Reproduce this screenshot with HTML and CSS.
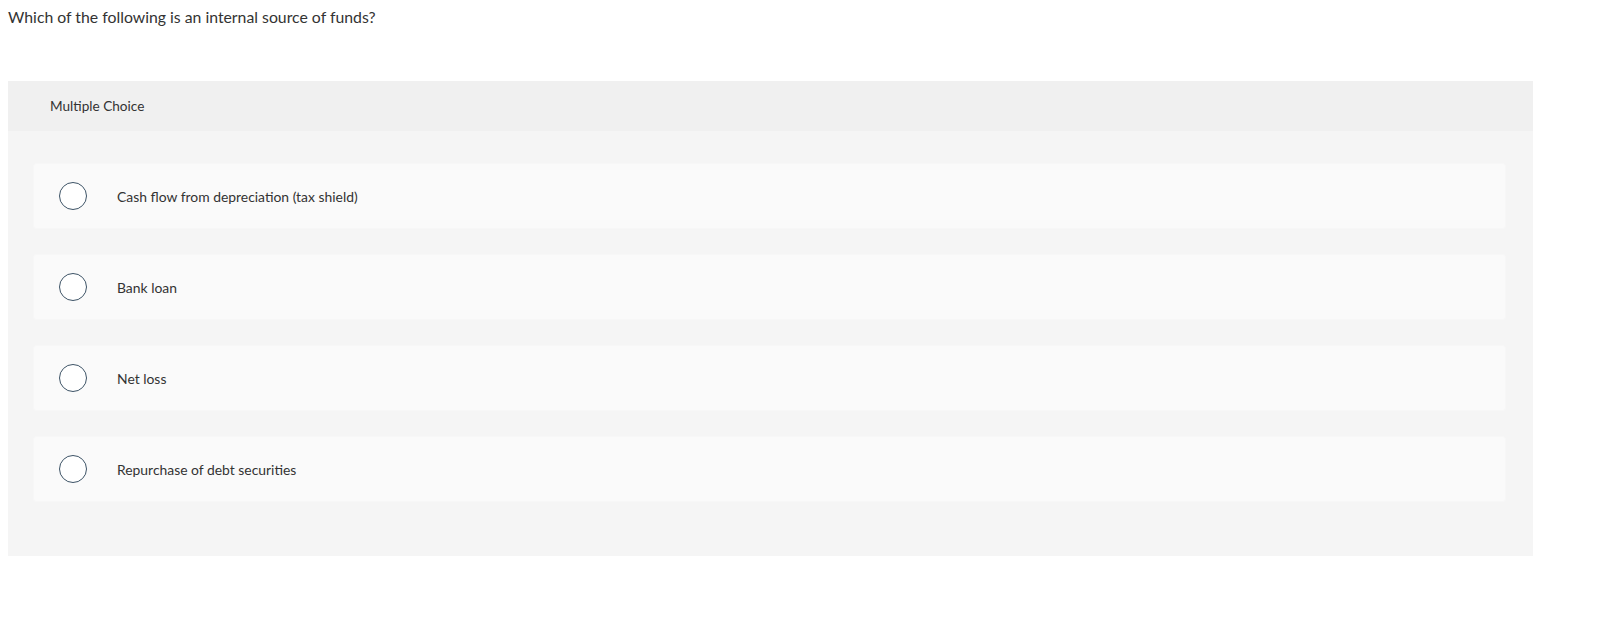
FILE: index.html
```html
<!DOCTYPE html>
<html lang="en">
<head>
    <meta charset="UTF-8">
    <title>Multiple Choice</title>
    <link rel="stylesheet" href="styles.css">
</head>
<body>

    <!-- Question -->
    <p class="question">Which of the following is an internal source of funds?</p>

    <!-- Answer panel -->
    <div class="choice-panel">
        <div class="choice-header">Multiple Choice</div>
        <div class="choice-list">
            <label class="choice">
                <span class="radio"></span>
                <span class="choice-text">Cash flow from depreciation (tax shield)</span>
            </label>
            <label class="choice">
                <span class="radio"></span>
                <span class="choice-text">Bank loan</span>
            </label>
            <label class="choice">
                <span class="radio"></span>
                <span class="choice-text">Net loss</span>
            </label>
            <label class="choice">
                <span class="radio"></span>
                <span class="choice-text">Repurchase of debt securities</span>
            </label>
        </div>
    </div>

</body>
</html>
```

FILE: styles.css
```css
/* General */
body {
    margin: 0;
    padding: 0 8px;
    background-color: #fff;
    color: #333;
    font-family: "Lato", "Open Sans", sans-serif;
}

.question {
    margin: 7px 0 0;
    font-size: 15.8px;
    line-height: 20px;
    color: #333;
}

/* Panel */
.choice-panel {
    margin-top: 54px;
    width: 1525px;
    background-color: #f5f5f5;
}

.choice-header {
    height: 50px;
    display: flex;
    align-items: center;
    padding-left: 42px;
    background-color: #f0f0f0;
    font-size: 13.6px;
    color: #333;
}

.choice-list {
    display: flex;
    flex-direction: column;
    gap: 25px;
    padding: 32px 27px 54px 25px;
}

.choice {
    height: 66px;
    box-sizing: border-box;
    display: flex;
    align-items: center;
    padding-left: 25px;
    background-color: #fafafa;
    border: 1px solid #f7f7f7;
    border-radius: 3px;
    cursor: pointer;
}

.radio {
    width: 28px;
    height: 28px;
    box-sizing: border-box;
    border: 1.5px solid #3d5366;
    border-radius: 50%;
    background-color: #fff;
    flex-shrink: 0;
}

.choice-text {
    margin-left: 30px;
    font-size: 13.9px;
    color: #333;
}
```
